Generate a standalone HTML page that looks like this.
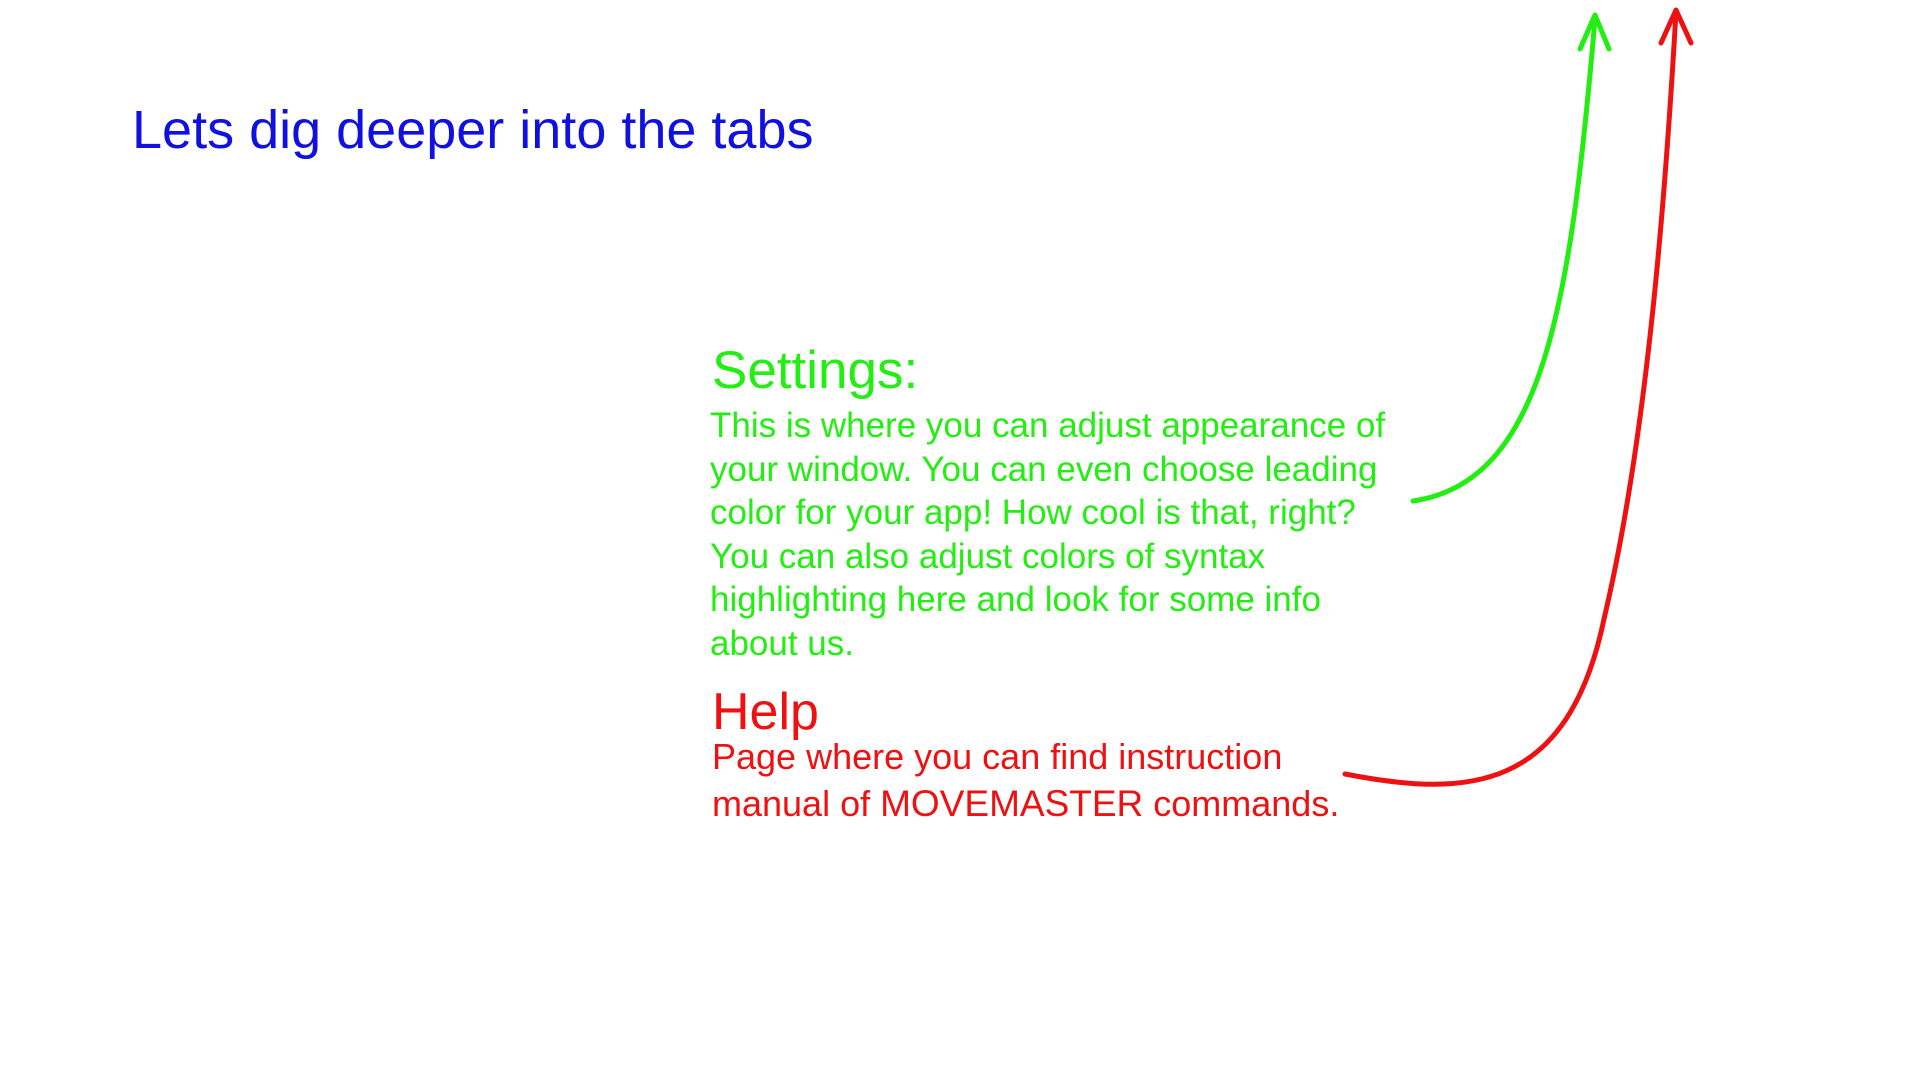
<!DOCTYPE html>
<html><head><meta charset="utf-8"><style>
html,body{margin:0;padding:0;width:1920px;height:1080px;background:#fff;overflow:hidden;font-family:"Liberation Sans",sans-serif;}
.t{position:absolute;white-space:nowrap;}
</style></head><body>
<div class="t" style="left:132px;top:99px;font-size:54px;color:#1010e0;">Lets dig deeper into the tabs</div>
<div class="t" style="left:712px;top:340px;font-size:53px;color:#22ee11;">Settings:</div>
<div class="t" style="left:710px;top:404px;font-size:35px;line-height:43.5px;color:#22ee11;">This is where you can adjust appearance of<br>your window. You can even choose leading<br>color for your app! How cool is that, right?<br>You can also adjust colors of syntax<br>highlighting here and look for some info<br>about us.</div>
<div class="t" style="left:712px;top:682px;font-size:52px;color:#ee1111;">Help</div>
<div class="t" style="left:712px;top:733px;font-size:36px;line-height:47px;color:#ee1111;">Page where you can find instruction<br>manual of <span style="font-size:37px">MOVEMASTER</span> commands.</div>
<svg width="1920" height="1080" style="position:absolute;left:0;top:0">
<g fill="none" stroke-width="5" stroke-linecap="round" stroke-linejoin="round">
<path d="M1429 501 C1559 482 1586 309 1611 19" stroke="#22ee11" transform="translate(-16,0)"/>
<path d="M1596 49 L1611 15 L1625 49" stroke="#22ee11" transform="translate(-16,0)"/>
<path d="M1361 774 C1484 798 1584 792 1620 619 C1664 433 1682 186 1692 12" stroke="#ee1111" transform="translate(-16,0)"/>
<path d="M1677 43 L1692 10 L1707 43" stroke="#ee1111" transform="translate(-16,0)"/>
</g></svg>
</body></html>
